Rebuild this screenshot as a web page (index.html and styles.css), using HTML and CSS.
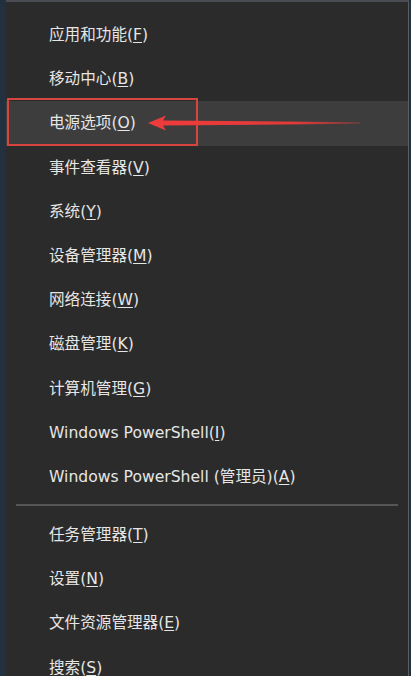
FILE: index.html
```html
<!DOCTYPE html>
<html>
<head>
    <meta charset="utf-8">
    <title>快速链接菜单</title>
    <link rel="stylesheet" href="styles.css">
</head>
<body>

<div class="menu">
    <ul class="group">
        <li class="item">应用和功能(<u>F</u>)</li>
        <li class="item">移动中心(<u>B</u>)</li>
        <li class="item item-active">电源选项(<u>O</u>)</li>
        <li class="item">事件查看器(<u>V</u>)</li>
        <li class="item">系统(<u>Y</u>)</li>
        <li class="item">设备管理器(<u>M</u>)</li>
        <li class="item">网络连接(<u>W</u>)</li>
        <li class="item">磁盘管理(<u>K</u>)</li>
        <li class="item">计算机管理(<u>G</u>)</li>
        <li class="item">Windows PowerShell(<u>I</u>)</li>
        <li class="item">Windows PowerShell (管理员)(<u>A</u>)</li>
    </ul>
    <div class="sep"></div>
    <ul class="group">
        <li class="item">任务管理器(<u>T</u>)</li>
        <li class="item">设置(<u>N</u>)</li>
        <li class="item">文件资源管理器(<u>E</u>)</li>
        <li class="item">搜索(<u>S</u>)</li>
    </ul>
</div>

<!--标注：红框和箭头-->
<div class="mark-box"></div>
<svg class="mark-arrow" width="220" height="20" viewBox="0 0 220 20">
    <defs>
        <linearGradient id="fade" x1="0" y1="0" x2="1" y2="0">
            <stop offset="0" stop-color="#ee3b3b"/>
            <stop offset="0.7" stop-color="#e43a3a"/>
            <stop offset="1" stop-color="#e43a3a" stop-opacity="0.3"/>
        </linearGradient>
    </defs>
    <polygon points="0,10 18,2.5 15,7.5 212,9.3 212,10.7 15,12.5 18,17.5" fill="url(#fade)"/>
</svg>

</body>
</html>
```

FILE: styles.css
```css
*{
    padding: 0;
    margin: 0;
}

body{
    width: 411px;
    height: 676px;
    overflow: hidden;
    background-color: #22303f;
    font-family: "DejaVu Sans", "Noto Sans CJK SC", sans-serif;
    position: relative;
}

.menu{
    box-sizing: border-box;
    width: 403px;
    height: 676px;
    margin-left: 6px;
    padding-top: 11px;
    background-color: #2b2b2b;
    border-top: 2px solid #4a4e54;
    border-right: 1px solid #5a5c60;
}

.group{
    list-style: none;
}

.item{
    height: 44.2px;
    line-height: 44.2px;
    padding-left: 43px;
    font-size: 15.6px;
    color: #e6e6e6;
    white-space: nowrap;
}

.item u{
    text-underline-offset: 2px;
}

.item-active{
    background-color: #3d3d3d;
}

/*两组之间的分隔线*/
.sep{
    height: 14px;
    margin: 0 10px;
    position: relative;
}

.sep:after{
    content: "";
    display: block;
    position: absolute;
    left: 0;
    right: 0;
    top: 5px;
    height: 2px;
    background-color: #565656;
}

.mark-box{
    position: absolute;
    left: 7px;
    top: 98px;
    width: 191px;
    height: 48px;
    box-sizing: border-box;
    border: 2px solid #d8453f;
}

.mark-arrow{
    position: absolute;
    left: 148px;
    top: 113px;
}
```
